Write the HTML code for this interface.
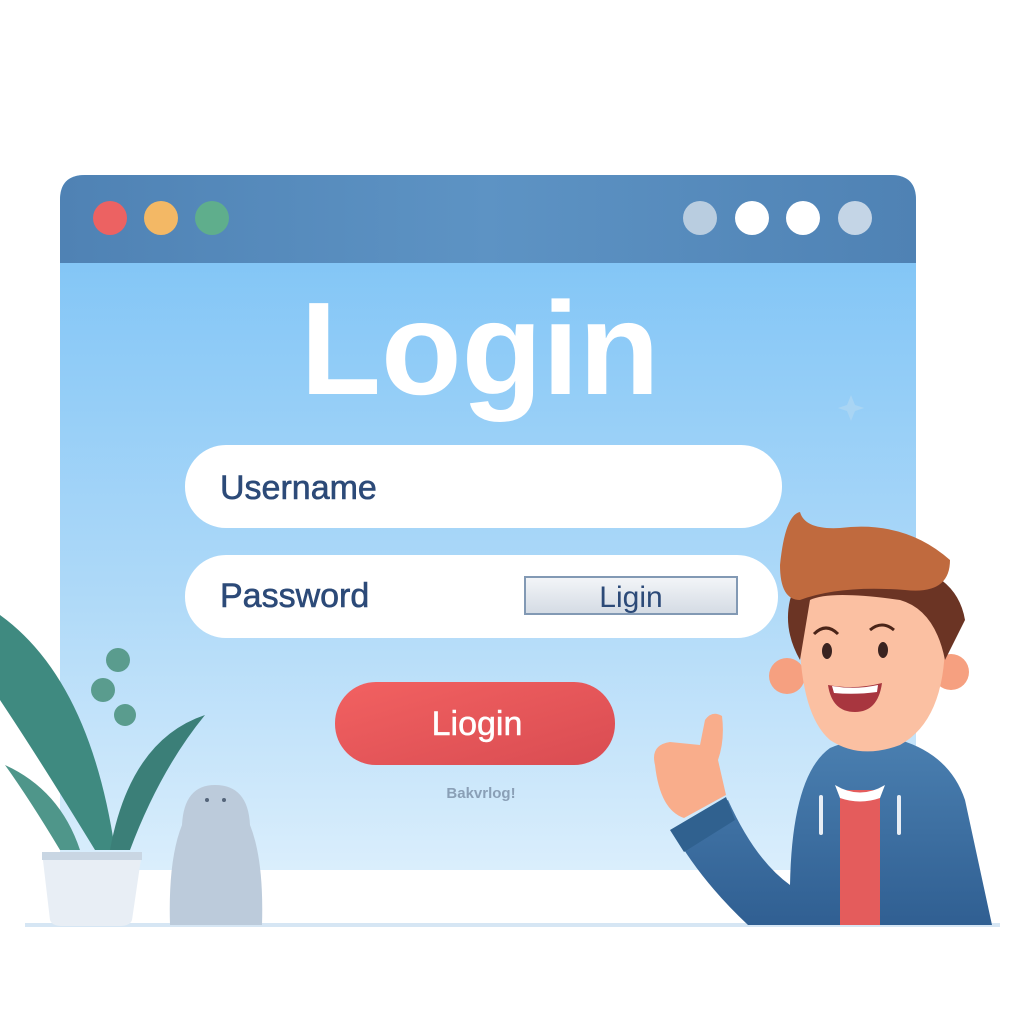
<!DOCTYPE html>
<html><head><style>
html,body{margin:0;padding:0;background:#fff;}
svg{display:block}
text{font-family:"Liberation Sans",sans-serif}
</style></head><body>
<svg width="1024" height="1024" viewBox="0 0 1024 1024" xmlns="http://www.w3.org/2000/svg">
<defs>
<linearGradient id="content" x1="0" y1="0" x2="0" y2="1">
<stop offset="0" stop-color="#78c1f6"/><stop offset="0.6" stop-color="#aed9f8"/><stop offset="1" stop-color="#daeefc"/></linearGradient>
<linearGradient id="bar" x1="0" y1="0" x2="1" y2="0">
<stop offset="0" stop-color="#4f82b4"/><stop offset="0.5" stop-color="#5d93c4"/><stop offset="1" stop-color="#4f82b4"/></linearGradient>
<linearGradient id="red" x1="0" y1="0" x2="1" y2="1">
<stop offset="0" stop-color="#f26161"/><stop offset="1" stop-color="#d94c52"/></linearGradient>
<linearGradient id="btn" x1="0" y1="0" x2="0" y2="1">
<stop offset="0" stop-color="#f3f5f8"/><stop offset="1" stop-color="#d4dbe4"/></linearGradient>
<linearGradient id="hood" x1="0" y1="0" x2="0" y2="1">
<stop offset="0" stop-color="#4a7fb0"/><stop offset="1" stop-color="#305f92"/></linearGradient>
</defs>
<path d="M85 175 H891 Q916 175 916 200 V870 H60 V200 Q60 175 85 175 Z" fill="url(#content)"/>
<path d="M85 175 H891 Q916 175 916 200 V263 H60 V200 Q60 175 85 175 Z" fill="url(#bar)"/>
<circle cx="110" cy="218" r="17" fill="#ec6262"/>
<circle cx="161" cy="218" r="17" fill="#f3b865"/>
<circle cx="212" cy="218" r="17" fill="#5fae8c"/>
<circle cx="700" cy="218" r="17" fill="#b9cde0"/>
<circle cx="752" cy="218" r="17" fill="#ffffff"/>
<circle cx="803" cy="218" r="17" fill="#ffffff"/>
<circle cx="855" cy="218" r="17" fill="#c4d5e6"/>
<text x="480" y="394" font-size="132" font-weight="bold" fill="#fff" text-anchor="middle">Login</text>
<path d="M851 395 L855 405 L864 408 L855 411 L851 421 L847 411 L838 408 L847 405 Z" fill="#a9d5f4"/>
<rect x="185" y="445" width="597" height="83" rx="41" fill="#fff"/>
<text x="220" y="499" font-size="34" fill="#2c4a78" stroke="#2c4a78" stroke-width="0.6">Username</text>
<rect x="185" y="555" width="593" height="83" rx="41" fill="#fff"/>
<text x="220" y="607" font-size="34" fill="#2c4a78" stroke="#2c4a78" stroke-width="0.6">Password</text>
<rect x="525" y="577" width="212" height="37" fill="url(#btn)" stroke="#8299b4" stroke-width="2"/>
<text x="631" y="607" font-size="30" fill="#2c4a78" text-anchor="middle">Ligin</text>
<rect x="335" y="682" width="280" height="83" rx="41" fill="url(#red)"/>
<text x="477" y="735" font-size="34" fill="#fff" text-anchor="middle" stroke="#fff" stroke-width="0.5">Liogin</text>
<text x="481" y="798" font-size="15" fill="#8a9fb6" text-anchor="middle" font-weight="bold">Bakvrlog!</text>
<rect x="25" y="923" width="975" height="4" fill="#d6e6f4"/>
<path d="M0 615 Q90 680 115 850 L95 850 Q40 760 0 700 Z" fill="#3f8a80"/>
<path d="M205 715 Q130 740 110 850 L130 850 Q160 770 205 715 Z" fill="#3b7f78"/>
<path d="M5 765 Q60 790 80 850 L60 850 Q30 800 5 765 Z" fill="#4f968a"/>
<circle cx="118" cy="660" r="12" fill="#5a9c8e"/><circle cx="103" cy="690" r="12" fill="#5a9c8e"/><circle cx="125" cy="715" r="11" fill="#5a9c8e"/>
<path d="M42 852 H142 L132 920 Q130 926 120 926 H62 Q52 926 50 920 Z" fill="#e8eef5"/>
<path d="M42 852 H142 V860 H42 Z" fill="#c9d6e3"/>
<path d="M215 785 Q248 785 250 825 Q264 860 262 925 H170 Q168 860 182 825 Q184 785 215 785 Z" fill="#bccbdb"/>
<circle cx="207" cy="800" r="2" fill="#55657a"/><circle cx="224" cy="800" r="2" fill="#55657a"/>
<!-- person -->
<path d="M672 830 L728 800 Q755 860 790 885 Q792 775 830 748 Q860 735 900 740 Q950 755 965 800 L992 925 H748 Q700 880 672 830 Z" fill="url(#hood)"/>
<path d="M670 830 L726 797 L735 820 L684 852 Z" fill="#30618f"/>
<path d="M840 790 H880 V925 H840 Z" fill="#e45c5c"/>
<path d="M835 785 Q860 800 885 785 L880 798 Q860 805 840 798 Z" fill="#fff"/>
<rect x="819" y="795" width="4" height="40" rx="2" fill="#e8eef5"/>
<rect x="897" y="795" width="4" height="40" rx="2" fill="#e8eef5"/>
<path d="M655 765 Q650 745 670 742 L700 745 L705 720 Q712 710 722 716 Q725 740 718 760 L726 795 L684 818 Q660 810 655 765 Z" fill="#f9ad8b"/>
<circle cx="787" cy="676" r="18" fill="#f6a080"/>
<circle cx="951" cy="672" r="18" fill="#f6a080"/>
<path d="M800 600 Q800 570 870 570 Q945 580 945 640 Q945 720 900 745 Q860 760 830 740 Q795 710 800 600 Z" fill="#fbc0a2"/>
<path d="M790 600 Q800 560 860 560 Q955 560 965 620 L945 660 Q935 610 900 600 Q830 590 810 600 L800 660 Q783 630 790 600 Z" fill="#6b3424"/>
<path d="M780 565 Q785 515 800 512 Q805 530 840 528 Q905 520 950 560 Q950 595 905 590 Q840 585 800 600 Q780 600 780 565 Z" fill="#c06a3e"/>
<path d="M814 634 Q826 622 838 634" stroke="#4a2418" stroke-width="3" fill="none"/>
<path d="M870 630 Q882 620 894 630" stroke="#4a2418" stroke-width="3" fill="none"/>
<ellipse cx="827" cy="651" rx="5" ry="8" fill="#3a2320"/>
<ellipse cx="883" cy="650" rx="5" ry="8" fill="#3a2320"/>
<path d="M828 685 Q855 690 882 683 Q878 712 855 712 Q832 712 828 685 Z" fill="#a8363f"/>
<path d="M832 686 Q855 690 878 685 L877 692 Q855 695 834 693 Z" fill="#fff"/>
</svg>
</body></html>
